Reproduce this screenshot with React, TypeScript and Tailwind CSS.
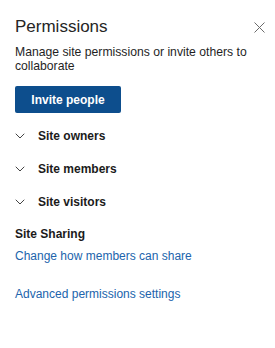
import React from "react";

const Chevron = () => (
  <svg width="10" height="6" viewBox="0 0 10 6" fill="none" className="shrink-0">
    <path d="M1 1L5 5L9 1" stroke="#444" strokeWidth="1" strokeLinecap="round" strokeLinejoin="round" />
  </svg>
);

const Row = ({ label }: { label: string }) => (
  <div className="flex h-[33px] items-center">
    <div className="w-[23px] flex items-center">
      <Chevron />
    </div>
    <span className="text-[12px] font-bold text-[#1b1b1b] leading-[16px]">{label}</span>
  </div>
);

export default function App() {
  return (
    <div
      className="w-[275px] h-[348px] bg-white pl-[15px] pr-[10px] pt-[15px]"
      style={{ fontFamily: '"Liberation Sans", Arial, sans-serif' }}
    >
      <div className="flex items-center justify-between h-[24px]">
        <h1 className="text-[17px] leading-[24px] text-[#252525] font-normal">Permissions</h1>
        <svg width="11" height="11" viewBox="0 0 11 11" fill="none">
          <path d="M0.5 0.5L10.5 10.5M10.5 0.5L0.5 10.5" stroke="#6b6b6b" strokeWidth="1" />
        </svg>
      </div>
      <p className="mt-[6px] text-[12.2px] leading-[14px] text-[#1f1f1f] w-[240px]">
        Manage site permissions or invite others to collaborate
      </p>
      <button className="mt-[13px] h-[27px] w-[106px] bg-[#0d4e8d] text-white text-[12px] font-bold rounded-[2px] flex items-center justify-center">
        Invite people
      </button>
      <div className="mt-[6px]">
        <Row label="Site owners" />
        <Row label="Site members" />
        <Row label="Site visitors" />
      </div>
      <div className="mt-[8px] text-[12px] leading-[16px] font-bold text-[#1b1b1b]">Site Sharing</div>
      <div className="mt-[6px] text-[12px] leading-[16px] text-[#2164ac]">Change how members can share</div>
      <div className="mt-[22px] text-[12px] leading-[16px] text-[#2164ac]">Advanced permissions settings</div>
    </div>
  );
}
